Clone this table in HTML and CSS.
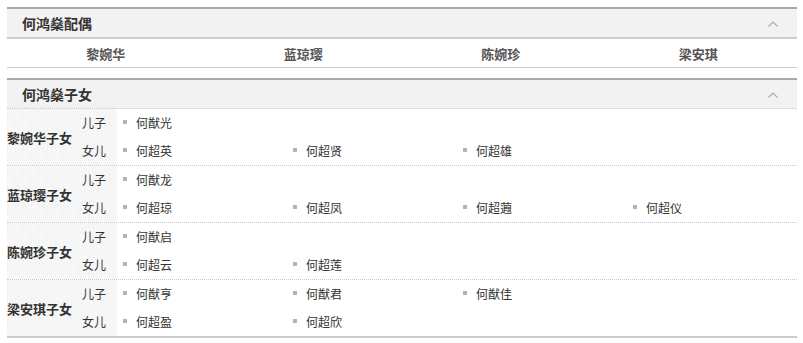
FILE: index.html
```html
<!DOCTYPE html>
<html lang="zh-CN">
<head>
<meta charset="utf-8">
<title>何鸿燊家族</title>
<link rel="stylesheet" href="styles.css">
</head>
<body>
<div class="wrap">
  <div class="sec">
    <div class="sec-head">
      <span class="sec-title">何鸿燊配偶</span>
      <svg class="caret" width="10" height="6" viewBox="0 0 10 6"><polyline points="0.5,5.5 5,1 9.5,5.5" fill="none" stroke="#aaa" stroke-width="1.2"/></svg>
    </div>
    <div class="spouses">
      <div class="spouse">黎婉华</div>
      <div class="spouse">蓝琼璎</div>
      <div class="spouse">陈婉珍</div>
      <div class="spouse">梁安琪</div>
    </div>
  </div>

  <div class="sec sec2">
    <div class="sec-head dotted">
      <span class="sec-title">何鸿燊子女</span>
      <svg class="caret" width="10" height="6" viewBox="0 0 10 6"><polyline points="0.5,5.5 5,1 9.5,5.5" fill="none" stroke="#aaa" stroke-width="1.2"/></svg>
    </div>

    <div class="row">
      <div class="who">黎婉华子女</div>
      <div class="rels"><div class="rel">儿子</div><div class="rel">女儿</div></div>
      <div class="lists">
        <div class="line"><span class="item">何猷光</span></div>
        <div class="line"><span class="item">何超英</span><span class="item">何超贤</span><span class="item">何超雄</span></div>
      </div>
    </div>

    <div class="row">
      <div class="who">蓝琼璎子女</div>
      <div class="rels"><div class="rel">儿子</div><div class="rel">女儿</div></div>
      <div class="lists">
        <div class="line"><span class="item">何猷龙</span></div>
        <div class="line"><span class="item">何超琼</span><span class="item">何超凤</span><span class="item">何超蕸</span><span class="item">何超仪</span></div>
      </div>
    </div>

    <div class="row">
      <div class="who">陈婉珍子女</div>
      <div class="rels"><div class="rel">儿子</div><div class="rel">女儿</div></div>
      <div class="lists">
        <div class="line"><span class="item">何猷启</span></div>
        <div class="line"><span class="item">何超云</span><span class="item">何超莲</span></div>
      </div>
    </div>

    <div class="row last">
      <div class="who">梁安琪子女</div>
      <div class="rels"><div class="rel">儿子</div><div class="rel">女儿</div></div>
      <div class="lists">
        <div class="line"><span class="item">何猷亨</span><span class="item">何猷君</span><span class="item">何猷佳</span></div>
        <div class="line"><span class="item">何超盈</span><span class="item">何超欣</span></div>
      </div>
    </div>
  </div>
</div>
</body>
</html>
```

FILE: styles.css
```css
* { box-sizing: border-box; }
html, body { margin: 0; padding: 0; background: #fff; }
body {
  font-family: "Noto Sans CJK SC", "Noto Sans", sans-serif;
  font-size: 12px;
  color: #333;
}
.wrap { margin: 7px 6px 0 7px; }
.sec { border-top: 2px solid #a9a9a9; }
.sec2 { margin-top: 10px; }
.sec-head {
  height: 30px;
  background: #f2f2f2;
  border-bottom: 2px solid #cfcfcf;
  display: flex;
  align-items: center;
  justify-content: space-between;
  padding: 0 19px 0 15px;
}
.sec-head.dotted { height: 29px; border-bottom: 1px dotted #c8c8c8; }
.sec-title { font-size: 14px; font-weight: bold; color: #333; line-height: 1; }
.caret { display: block; margin-top: 1px; }
.spouses {
  display: grid;
  grid-template-columns: repeat(4, 1fr);
  height: 29px;
  border-bottom: 1px solid #cccccc;
}
.spouse {
  text-align: center;
  font-size: 13px;
  font-weight: bold;
  color: #555;
  line-height: 29px;
}
.row {
  display: flex;
  height: 57px;
  border-bottom: 1px dotted #c8c8c8;
}
.row.last { border-bottom: 2px solid #cccccc; height: 58px; }
.who, .rels {
  flex: none;
  white-space: nowrap;
  background-color: #f8f8f8;
  background-image:
    repeating-linear-gradient(45deg, rgba(0,0,0,0.015) 0 1px, transparent 1px 3px),
    repeating-linear-gradient(90deg, rgba(0,0,0,0.012) 0 1px, transparent 1px 4px);
}
.who {
  width: 74px;
  display: flex;
  align-items: center;
  font-size: 13px;
  font-weight: bold;
  color: #333;
}
.rels { width: 36px; padding-left: 1px; }
.rel, .line { height: 28px; line-height: 28px; }
.lists { flex: 1; padding-left: 5px; }
.line { display: flex; }
.item { width: 170px; flex: none; display: flex; align-items: center; }
.item::before {
  content: "";
  width: 4px;
  height: 4px;
  background: #b3b3b3;
  margin: 0 9px 2px 1px;
}
```
